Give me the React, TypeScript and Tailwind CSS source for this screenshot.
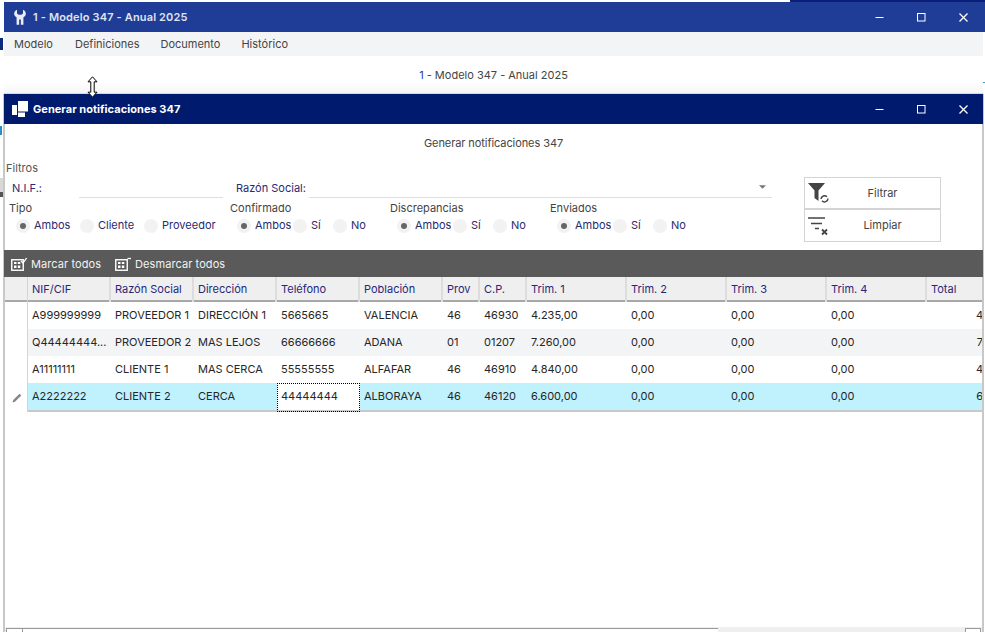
import React from "react";

const font = { fontFamily: "Inter, 'Liberation Sans', sans-serif" };

function WinControls({ mr }: { mr: string }) {
  return (
    <div className={`flex items-center h-full ml-auto ${mr}`}>
      <svg width="9" height="9" viewBox="0 0 9 9" className="mr-[33px]"><path d="M0.500 4.500H8.500" stroke="#fff" strokeWidth="1" /></svg>
      <svg width="9" height="9" viewBox="0 0 9 9" className="mr-[33px]"><rect x="0.500" y="0.500" width="7.500" height="7.500" fill="none" stroke="#fff" strokeWidth="1" /></svg>
      <svg width="9" height="9" viewBox="0 0 9 9"><path d="M0.500 0.500L8.500 8.500M8.500 0.500L0.500 8.500" stroke="#fff" strokeWidth="1.300" /></svg>
    </div>
  );
}

function Radio({ label, on, w }: { label: string; on?: boolean; w: string }) {
  return (
    <div className={`flex items-center ${w}`}>
      <span className="w-[14px] h-[14px] rounded-full bg-[#f2f2f2] flex items-center justify-center shrink-0">
        {on && <span className="w-[6px] h-[6px] rounded-full bg-[#666]" />}
      </span>
      <span className="ml-[4px] text-[#2a2a70]">{label}</span>
    </div>
  );
}

function Group({ title, items, w }: { title: string; items: [string, string][]; w: string }) {
  return (
    <div className={w}>
      <div className="h-[15px] leading-[15px] text-[#444]">{title}</div>
      <div className="flex pl-[7px] mt-[2px] h-[15px]">
        {items.map(([l, wd], i) => (
          <Radio key={l} label={l} on={i === 0} w={wd} />
        ))}
      </div>
    </div>
  );
}

const cols = "grid grid-cols-[23px_83px_83px_83px_83px_83px_37px_47px_100px_100px_100px_100px_100px]";
const headers = ["NIF/CIF", "Razón Social", "Dirección", "Teléfono", "Población", "Prov", "C.P.", "Trim. 1", "Trim. 2", "Trim. 3", "Trim. 4", "Total"];
const rows = [
  ["A999999999", "PROVEEDOR 1", "DIRECCIÓN 1", "5665665", "VALENCIA", "46", "46930", "4.235,00", "0,00", "0,00", "0,00", "4"],
  ["Q44444444...", "PROVEEDOR 2", "MAS LEJOS", "66666666", "ADANA", "01", "01207", "7.260,00", "0,00", "0,00", "0,00", "7"],
  ["A11111111", "CLIENTE 1", "MAS CERCA", "55555555", "ALFAFAR", "46", "46910", "4.840,00", "0,00", "0,00", "0,00", "4"],
  ["A2222222", "CLIENTE 2", "CERCA", "44444444", "ALBORAYA", "46", "46120", "6.600,00", "0,00", "0,00", "0,00", "6"],
];
const rowBg = ["bg-white", "bg-[#f3f4f6]", "bg-white", "bg-[#c0f2fe]"];

function GridIcon({ check }: { check?: boolean }) {
  return (
    <svg width="16" height="14" viewBox="0 0 16 14">
      <rect x="0.750" y="2.750" width="11.500" height="10.500" fill="none" stroke="#fff" strokeWidth="1.400" />
      <path d="M3 5h2.500v2H3zM6.800 5h2.500v2H6.800zM3 8.500h2.500v2.500H3zM6.800 8.500h2.500v2.500H6.800z" fill="#fff" />
      {check ? (
        <path d="M10 4L12 6L15.500 1" fill="none" stroke="#fff" strokeWidth="1.300" />
      ) : (
        <path d="M12.500 1.500H16" fill="none" stroke="#fff" strokeWidth="1.300" />
      )}
    </svg>
  );
}

export default function App() {
  return (
    <div style={font} className="relative w-[985px] h-[632px] overflow-hidden bg-white text-[11px] text-[#333] flex flex-col">
      {/* desktop slivers behind the windows */}
      <div className="absolute left-0 top-[38px] w-[3px] h-[12px] bg-[#0a2a7a]" />
      <div className="absolute left-0 top-[126px] w-[3px] h-[9px] border-l-2 border-[#2a8fc8]" />
      <div className="absolute left-0 top-[178px] w-[3px] h-[14px] bg-[#d8d8d8]" />
      <div className="absolute left-0 top-[192px] w-[3px] h-[5px] bg-[#555]" />
      <div className="absolute right-0 top-0 w-[195px] h-[2px] bg-[#0a1f78]" />
      <div className="absolute right-0 top-[82px] w-[2px] h-[1px] bg-[#2aa8d8]" />

      {/* outer window */}
      <div className="ml-[4px] mt-[2px] flex flex-col shrink-0">
        <div className="h-[30px] bg-[#1f3d96] flex items-center pl-[10px] text-white">
          <svg width="12" height="16" viewBox="0 0 14 18">
            <path d="M3.500 0.500V5L5.500 6.500H8.500L10.500 5V0.500C13 1.700 14 3.500 13.800 5.500C13.600 7.500 12.300 8.800 11 9.400V18H8V12H6V18H3V9.400C1.700 8.800 0.400 7.500 0.200 5.500C0 3.500 1 1.700 3.500 0.500Z" fill="#e8ecf5" />
          </svg>
          <span className="ml-[7px] font-semibold tracking-[0.150px] text-[#dfe4f2]">1 - Modelo 347 - Anual 2025</span>
          <WinControls mr="mr-[17px]" />
        </div>
        <div className="h-[24px] bg-[#f3f4f6] flex items-center pl-[10px] gap-[21px] text-[#444] mr-[2px]">
          <span className="mr-[1px]">Modelo</span>
          <span>Definiciones</span>
          <span>Documento</span>
          <span>Histórico</span>
        </div>
        <div className="h-[38px] text-center leading-[38px] bg-gradient-to-b from-white from-70% to-[#f5f5f5] text-[#444] border-b border-[#d8d8d8] mr-[2px]">
          <span className="text-[#1f3d96]">1</span> - Modelo 347 - Anual 2025
        </div>
      </div>

      {/* inner window */}
      <div className="ml-[3px] mr-[1px] flex-1 min-h-0 flex flex-col border-x border-[#c8c8c8] overflow-hidden">
        <div className="h-[30px] shrink-0 bg-[#001a6e] flex items-center pl-[8px] text-white">
          <svg width="16" height="16" viewBox="0 0 16 16">
            <path d="M0 4H5V14H0Z M6 0H16V10.500H6Z M6 11.500H13V16H6Z" fill="#fff" />
          </svg>
          <span className="ml-[5px] font-bold tracking-[0.040px] text-[11px]">Generar notificaciones 347</span>
          <WinControls mr="mr-[15px]" />
        </div>

        <div className="h-[126px] shrink-0 flex border-x border-[#c8c8c8]">
          <div className="w-[798px]">
            <div className="text-center h-[38px] leading-[38px] text-[#444] w-[977px] tracking-[-0.080px]">Generar notificaciones 347</div>
            <div className="pl-[1px] h-[14px] leading-[14px] text-[#555] mt-[-1px]">Filtros</div>
            <div className="flex items-center h-[20px] pl-[7px] mt-[3px]">
              <span className="w-[67px] text-[#2a2a70]">N.I.F.:</span>
              <span className="w-[144px] h-[20px] border-b border-[#dedede]" />
              <span className="ml-[13px] w-[73px] text-[#2a2a70]">Razón Social:</span>
              <span className="relative w-[463px] h-[20px] border-b border-[#dedede]">
                <svg width="7" height="4" viewBox="0 0 8 4" className="absolute right-[6px] top-[7px]"><path d="M0 0H8L4 4Z" fill="#777" /></svg>
              </span>
            </div>
            <div className="flex pl-[4px] mt-[3px]">
              <Group title="Tipo" w="w-[221px]" items={[["Ambos", "w-[64px]"], ["Cliente", "w-[64px]"], ["Proveedor", "w-[70px]"]]} />
              <Group title="Confirmado" w="w-[160px]" items={[["Ambos", "w-[56px]"], ["Sí", "w-[40px]"], ["No", "w-[40px]"]]} />
              <Group title="Discrepancias" w="w-[160px]" items={[["Ambos", "w-[56px]"], ["Sí", "w-[40px]"], ["No", "w-[40px]"]]} />
              <Group title="Enviados" w="w-[160px]" items={[["Ambos", "w-[56px]"], ["Sí", "w-[40px]"], ["No", "w-[40px]"]]} />
            </div>
          </div>
          <div className="ml-[1px] pt-[53px] w-[137px]">
            <div className="h-[32px] border border-[#d4d4d4] relative flex items-center justify-center pl-[20px] text-[#444]">
              <svg width="22" height="20" viewBox="0 0 22 20" className="absolute left-[3px] top-[5px]">
                <path d="M0 0H17L10.500 7.500V18L6.500 15V7.500Z" fill="#444" />
                <path d="M13 16a3.500 3.500 0 0 1 6-2.200M20 15.500a3.500 3.500 0 0 1-6 2.300" fill="none" stroke="#444" strokeWidth="1.500" />
              </svg>
              Filtrar
            </div>
            <div className="h-[33px] border border-[#d4d4d4] relative flex items-center justify-center pl-[20px] text-[#444]">
              <svg width="22" height="20" viewBox="0 0 22 20" className="absolute left-[3px] top-[7px]">
                <path d="M0 1H17M3 6.500H14M7 11.500H11" stroke="#444" strokeWidth="1.400" fill="none" />
                <path d="M14 12.500L19 17.500M19 12.500L14 17.500" stroke="#444" strokeWidth="1.800" fill="none" />
              </svg>
              Limpiar
            </div>
          </div>
        </div>

        {/* toolbar */}
        <div className="h-[27px] shrink-0 bg-[#5a5a5a] flex items-center pl-[7px] text-[#f2f2f2]">
          <GridIcon check />
          <span className="ml-[4px] mt-[1px] tracking-[0.080px]">Marcar todos</span>
          <span className="ml-[14px]"><GridIcon /></span>
          <span className="ml-[4px] mt-[1px] tracking-[0.080px]">Desmarcar todos</span>
        </div>

        {/* table */}
        <div className="flex-1 min-h-0 overflow-hidden border-x border-[#c8c8c8]">
          <div className="w-[1100px]">
            <div className={`${cols} h-[25px] bg-[#efefef] border-b-2 border-[#a8a8a8] text-[#27277a]`}>
              <div className="border-r border-[#d4d4d4]" />
              {headers.map((h) => (
                <div key={h} className="pl-[4px] pr-[2px] leading-[25px] border-r-2 border-[#dcdcdc] whitespace-nowrap">{h}</div>
              ))}
            </div>
            {rows.map((r, i) => (
              <div key={r[0]} className={`${cols} h-[27px]`}>
                <div className="bg-white flex items-center justify-center pl-[1px] border-r border-[#d4d4d4]">
                  {i === 3 && (
                    <svg width="10" height="10" viewBox="0 0 10 10"><path d="M0.500 9.500L1.200 7L7.500 0.700L9.300 2.500L3 8.800Z" fill="#888" /></svg>
                  )}
                </div>
                {r.map((c, j) => {
                  const focus = i === 3 && j === 3;
                  return (
                    <div
                      key={j}
                      className={`${focus ? "bg-white outline-1 outline-dotted outline-black -outline-offset-1" : rowBg[i]} border-b-2 border-[#c9c9c9] pl-[4px] leading-[27px] text-[#262626] whitespace-nowrap ${j === 11 ? "text-right pr-[44px]" : ""}`}
                    >
                      {c}
                    </div>
                  );
                })}
              </div>
            ))}
          </div>
        </div>

        {/* horizontal scrollbar */}
        <div className="h-[5px] shrink-0 border-x border-[#c8c8c8]">
          <div className="h-full bg-[#efefef] flex items-end pl-[1px] pr-[1px]">
            <span className="w-[17px] h-[4px] border-t border-x border-[#999] bg-white" />
            <span className="w-[695px] h-[4px] border-t border-[#999] bg-white" />
            <span className="ml-auto w-[16px] h-[4px] border-t border-x border-[#999] bg-white" />
          </div>
        </div>
      </div>

      {/* mouse cursor */}
      <svg width="11" height="22" viewBox="0 0 11 22" className="absolute left-[87px] top-[76px]">
        <path d="M5.500 0.800L10 5.800H7.200V16.200H10L5.500 21.200L1 16.200H3.800V5.800H1Z" fill="#fff" stroke="#000" strokeWidth="1" />
      </svg>
    </div>
  );
}
